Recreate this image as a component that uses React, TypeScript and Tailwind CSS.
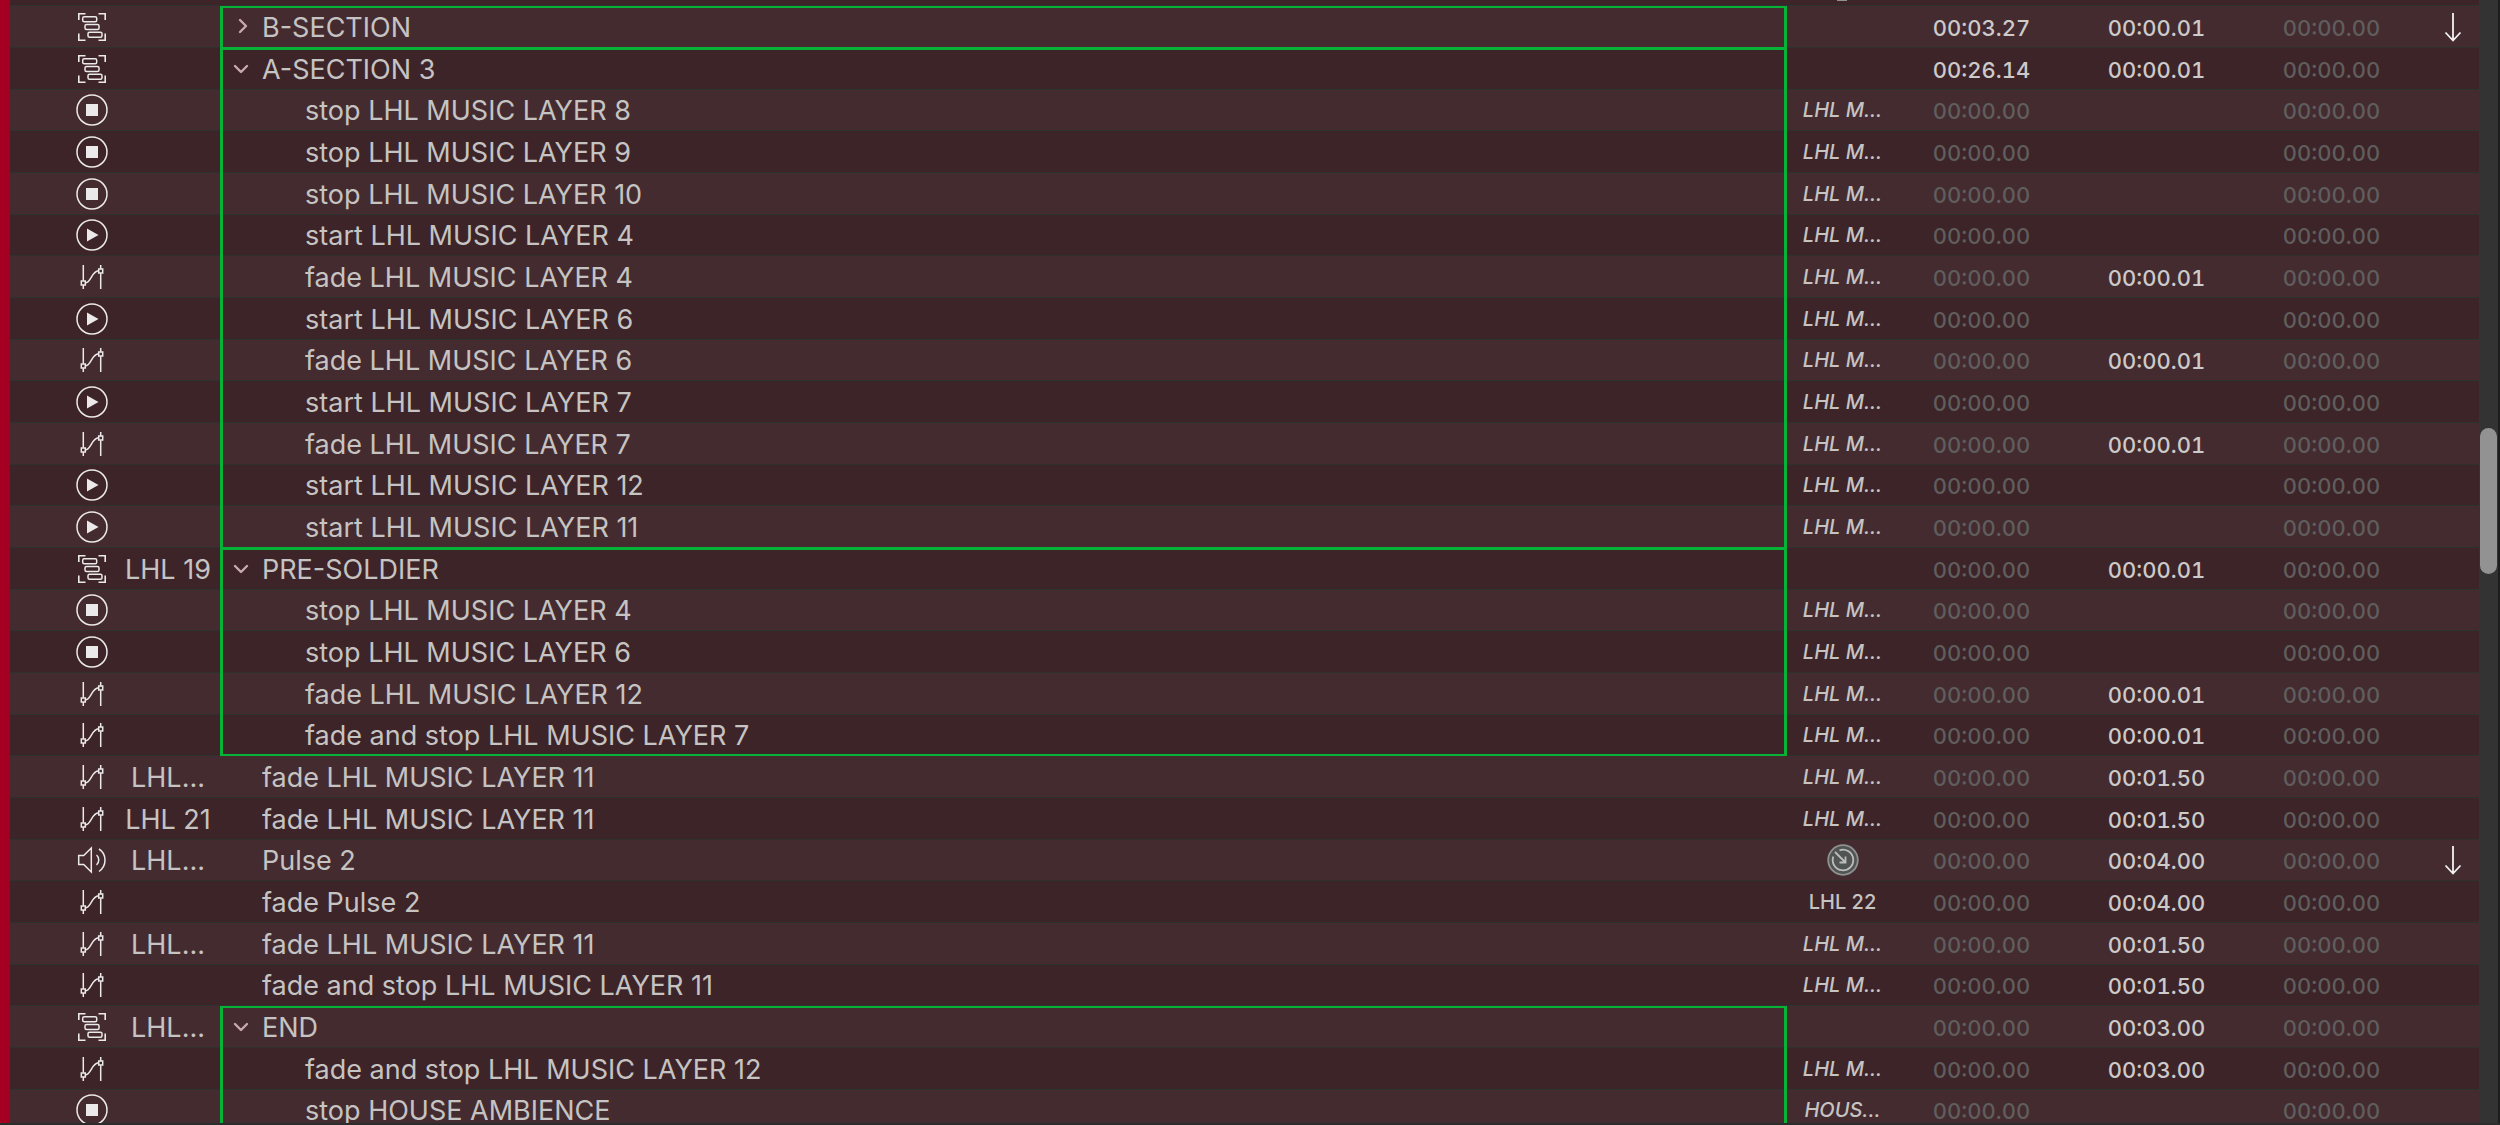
import React from 'react';

type Kind = 'group' | 'stop' | 'start' | 'fade' | 'audio';
type Cue = {
  kind: Kind;
  number?: string;
  name: string;
  open?: boolean;
  depth?: number;
  target?: string;
  hasDial?: boolean;
  pre?: string;
  action?: string;
  follow?: boolean;
  box?: string;
};

const ZERO = '00:00.00';

const cues: Cue[] = [
  { kind: 'group', name: 'B-SECTION', open: false, pre: '00:03.27', action: '00:00.01', follow: true, box: 'first' },
  { kind: 'group', name: 'A-SECTION 3', open: true, pre: '00:26.14', action: '00:00.01', box: 'joined' },
  { kind: 'stop', name: 'stop LHL MUSIC LAYER 8', depth: 1, target: 'LHL M...', box: 'mid' },
  { kind: 'stop', name: 'stop LHL MUSIC LAYER 9', depth: 1, target: 'LHL M...', box: 'mid' },
  { kind: 'stop', name: 'stop LHL MUSIC LAYER 10', depth: 1, target: 'LHL M...', box: 'mid' },
  { kind: 'start', name: 'start LHL MUSIC LAYER 4', depth: 1, target: 'LHL M...', box: 'mid' },
  { kind: 'fade', name: 'fade LHL MUSIC LAYER 4', depth: 1, target: 'LHL M...', action: '00:00.01', box: 'mid' },
  { kind: 'start', name: 'start LHL MUSIC LAYER 6', depth: 1, target: 'LHL M...', box: 'mid' },
  { kind: 'fade', name: 'fade LHL MUSIC LAYER 6', depth: 1, target: 'LHL M...', action: '00:00.01', box: 'mid' },
  { kind: 'start', name: 'start LHL MUSIC LAYER 7', depth: 1, target: 'LHL M...', box: 'mid' },
  { kind: 'fade', name: 'fade LHL MUSIC LAYER 7', depth: 1, target: 'LHL M...', action: '00:00.01', box: 'mid' },
  { kind: 'start', name: 'start LHL MUSIC LAYER 12', depth: 1, target: 'LHL M...', box: 'mid' },
  { kind: 'start', name: 'start LHL MUSIC LAYER 11', depth: 1, target: 'LHL M...', box: 'mid' },
  { kind: 'group', number: 'LHL 19', name: 'PRE-SOLDIER', open: true, action: '00:00.01', box: 'joined' },
  { kind: 'stop', name: 'stop LHL MUSIC LAYER 4', depth: 1, target: 'LHL M...', box: 'mid' },
  { kind: 'stop', name: 'stop LHL MUSIC LAYER 6', depth: 1, target: 'LHL M...', box: 'mid' },
  { kind: 'fade', name: 'fade LHL MUSIC LAYER 12', depth: 1, target: 'LHL M...', action: '00:00.01', box: 'mid' },
  { kind: 'fade', name: 'fade and stop LHL MUSIC LAYER 7', depth: 1, target: 'LHL M...', action: '00:00.01', box: 'last' },
  { kind: 'fade', number: 'LHL...', name: 'fade LHL MUSIC LAYER 11', target: 'LHL M...', action: '00:01.50' },
  { kind: 'fade', number: 'LHL 21', name: 'fade LHL MUSIC LAYER 11', target: 'LHL M...', action: '00:01.50' },
  { kind: 'audio', number: 'LHL...', name: 'Pulse 2', hasDial: true, action: '00:04.00', follow: true },
  { kind: 'fade', name: 'fade Pulse 2', target: 'LHL 22', action: '00:04.00' },
  { kind: 'fade', number: 'LHL...', name: 'fade LHL MUSIC LAYER 11', target: 'LHL M...', action: '00:01.50' },
  { kind: 'fade', name: 'fade and stop LHL MUSIC LAYER 11', target: 'LHL M...', action: '00:01.50' },
  { kind: 'group', number: 'LHL...', name: 'END', open: true, action: '00:03.00', box: 'first' },
  { kind: 'fade', name: 'fade and stop LHL MUSIC LAYER 12', depth: 1, target: 'LHL M...', action: '00:03.00', box: 'mid' },
  { kind: 'stop', name: 'stop HOUSE AMBIENCE', depth: 1, target: 'HOUS...', box: 'mid' },
];

const boxSides: Record<string, string> = {
  first: 'border-t-2 inset-y-0',
  joined: 'border-t-[3px] -top-px bottom-0',
  mid: '-top-px bottom-0',
  last: 'border-b-2 -top-px -bottom-px',
};

function KindIcon({ kind }: { kind: Kind }) {
  return (
    <svg viewBox="0 0 32 32" className="block size-8" fill="none" stroke="#ebe9e9" strokeWidth="1.5" role="img" aria-label={kind}>
      {kind === 'group' && (
        <>
          <path d="M2.8 9V2.8H9.5M22.5 2.8h6.7V9M2.8 22.5v6.7h6.700M22.500 29.200h6.700v-6.700" strokeWidth="1.6" />
          <rect x="6.7" y="5.7" width="14" height="5" rx="1.5" />
          <rect x="9" y="13.5" width="14" height="5" rx="1.5" />
          <rect x="12" y="21.3" width="14" height="5" rx="1.5" />
        </>
      )}
      {(kind === 'stop' || kind === 'start') && <circle cx="16" cy="16" r="15" />}
      {kind === 'stop' && <rect x="10" y="10" width="12" height="12" fill="#ebe9e9" stroke="none" />}
      {kind === 'start' && <path d="M11 9.5 22.5 16 11 22.5Z" fill="#ebe9e9" stroke="none" />}
      {kind === 'fade' && (
        <>
          <path d="M7.3 4v15.8M7.3 24v4M24.7 4v4M24.7 12.2V28" />
          <rect x="5.3" y="20" width="4" height="4" />
          <rect x="22.7" y="8" width="4" height="4" />
          <path d="M9.3 21.9c6 0 6-11.9 13.4-12.2" />
        </>
      )}
      {kind === 'audio' && (
        <>
          <path d="M2.7 11.5h5L15.3 4v24l-7.6-7.5h-5Z" />
          <path d="M20.5 11c3 2.5 3 7.5 0 10M23 5c8 5 8 17 0 22.500" />
        </>
      )}
    </svg>
  );
}

function TimeCell({ value }: { value?: string }) {
  return (
    <td className="p-0 pt-0.5 text-center text-[22px] font-medium tabular-nums">
      {value && <span className={value === ZERO ? 'text-[#5f5e5d]' : 'text-[#cdcaca]'}>{value}</span>}
    </td>
  );
}

function Row({ cue, index }: { cue: Cue; index: number }) {
  const height = index % 3 === 2 ? 'h-[41px]' : 'h-[42px]';
  return (
    <tr className={`${height} border-t border-[#2d312f] odd:bg-[#442b30] even:bg-[#3d2428]`}>
      <td className="p-0 pl-[66px]">
        <KindIcon kind={cue.kind} />
      </td>
      <td className="p-0 pt-0.5 text-center whitespace-nowrap">{cue.number}</td>
      <td className="relative p-0 pt-0.5">
        {cue.box && <span className={`pointer-events-none absolute inset-x-0 border-x-[3px] border-[#06b336] ${boxSides[cue.box]}`} />}
        <div className={`flex items-center ${cue.depth ? 'pl-[85px]' : 'pl-2.5'}`}>
          {!cue.depth && (
            <span className="flex w-8 shrink-0">
              {cue.kind === 'group' && (
                <button type="button" aria-label={`Toggle ${cue.name}`} aria-expanded={cue.open} className="block size-6">
                  <svg viewBox="0 0 24 24" className="size-6" fill="none" stroke="#c9a9b0" strokeWidth="2.4" strokeLinecap="round" strokeLinejoin="round">
                    {cue.open ? <path d="m5 8 6 6 6-6" /> : <path d="m10 4 6 6-6 6" />}
                  </svg>
                </button>
              )}
            </span>
          )}
          <span className="truncate">{cue.name}</span>
        </div>
      </td>
      <td className="p-0 pl-1 text-center text-[20px] font-medium">
        {cue.hasDial ? (
          <svg viewBox="0 0 32 32" className="mx-auto block size-8" fill="none" stroke="#bcbebc" strokeWidth="1.8" role="img" aria-label="Target">
            <circle cx="16" cy="16" r="14.8" fill="#505452" stroke="#8f9290" />
            <path d="M12.5 6.3A10.3 10.3 0 1 1 6.3 12.5M8 8l10.5 10.5M12.5 18.500h6v-6" />
          </svg>
        ) : (
          <span className={cue.target === 'LHL 22' ? '' : 'italic'}>{cue.target}</span>
        )}
      </td>
      <TimeCell value={cue.pre ?? ZERO} />
      <TimeCell value={cue.action} />
      <TimeCell value={ZERO} />
      <td className="p-0 pl-2">
        {cue.follow && (
          <svg viewBox="0 0 20 32" className="mx-auto block h-8 w-5" fill="none" stroke="#f2f2f2" strokeWidth="1.8" role="img" aria-label="Auto-continue">
            <path d="M10 2v27M2.5 21.5l7.500 8 7.500-8" />
          </svg>
        )}
      </td>
    </tr>
  );
}

export default function App() {
  return (
    <main className="flex h-screen overflow-hidden border-b-2 border-[#2b2d2c] bg-[#3d2428] font-['Inter','Liberation_Sans',sans-serif] text-[27px] leading-8 text-[#c6c3c3]">
      <div className="w-2.5 shrink-0 bg-[#a50022]" />
      <div className="min-w-0 flex-1">
        <div className="flex h-[5px] justify-end pr-[632px]">
          <div className="h-px w-2.5 bg-[#8f9290]" />
        </div>
        <table className="w-full table-fixed border-collapse">
          <colgroup>
            <col className="w-[106px]" />
            <col className="w-[104px]" />
            <col />
            <col className="w-[107px]" />
            <col className="w-[175px]" />
            <col className="w-[175px]" />
            <col className="w-[175px]" />
            <col className="w-[60px]" />
          </colgroup>
          <tbody>
            {cues.map((cue, i) => (
              <Row key={i} cue={cue} index={i} />
            ))}
          </tbody>
        </table>
      </div>
      <div className="flex w-[21px] shrink-0 flex-col border-r-2 border-[#1c1c1c] bg-[#333333] pt-0.5">
        <div className="basis-[38%]" />
        <div className="mx-px basis-[13%] rounded-full bg-[#929292]" />
      </div>
    </main>
  );
}
